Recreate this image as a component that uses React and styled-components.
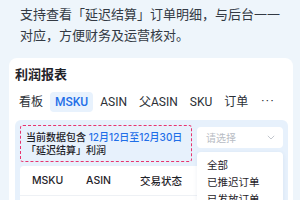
import React from "react";
import styled, { createGlobalStyle } from "styled-components";

const GlobalStyle = createGlobalStyle`
  html, body {
    margin: 0;
    padding: 0;
    background: #eef5fb;
    overflow: hidden;
  }
  body {
    font-family: "Inter", "Noto Sans CJK SC", sans-serif;
  }
`;

const Page = styled.div`
  width: 300px;
  height: 200px;
  overflow: hidden;
  background: #eef5fb;
`;

const Intro = styled.p`
  margin: 0;
  padding: 4px 16px 0 20px;
  font-size: 13px;
  line-height: 21px;
  color: #333a44;
`;

const Card = styled.section`
  margin: 12px 7px 0 9px;
  background: #ffffff;
  border-radius: 8px;
  padding: 7px 5px 0 6px;
  height: 200px;
`;

const Title = styled.h2`
  margin: 0;
  font-size: 13px;
  line-height: 18px;
  font-weight: 700;
  color: #1f2329;
`;

const Tabs = styled.div`
  display: flex;
  gap: 2px;
  margin: 9px 0 0 -1px;
  height: 20px;
  font-family: "Roboto", "Noto Sans CJK SC", sans-serif;
`;

const Tab = styled.div`
  padding: 0 5px;
  font-size: 12px;
  line-height: 20px;
  border-radius: 4px;
  color: ${(p) => (p.$active ? "#1f6fe8" : "#2b2f36")};
  background: ${(p) => (p.$active ? "#e8f2fd" : "transparent")};
  font-weight: ${(p) => (p.$active ? 500 : 400)};
`;

const More = styled.div`
  padding: 0 6px;
  font-size: 12px;
  line-height: 18px;
  letter-spacing: 1.5px;
  color: #2b2f36;
`;

const Panel = styled.div`
  margin-top: 8px;
  background: #e7f1fc;
  border-radius: 6px;
  padding: 5px;
  height: 120px;
`;

const FilterRow = styled.div`
  display: flex;
  gap: 5px;
  position: relative;
`;

const Notice = styled.div`
  width: 172px;
  box-sizing: border-box;
  border: 1px dashed #e8336e;
  border-radius: 3px;
  padding: 5px 5px 4px;
  font-size: 10px;
  line-height: 13px;
  font-weight: 500;
  color: #1f2329;
`;

const Blue = styled.span`
  color: #1f6fe8;
`;

const Select = styled.div`
  margin-top: 2px;
  flex: 1;
  height: 21px;
  background: #ffffff;
  border-radius: 4px;
  display: flex;
  align-items: center;
  justify-content: space-between;
  padding: 0 8px 0 9px;
  font-size: 10px;
  color: #b8bcc4;
`;

const Menu = styled.div`
  position: absolute;
  top: 27px;
  right: 0;
  width: 86px;
  height: 60px;
  background: #ffffff;
  border-radius: 4px;
  box-shadow: 0 1px 4px rgba(40, 80, 140, 0.08);
  padding: 5px 10px 0;
  box-sizing: border-box;
  z-index: 2;
`;

const MenuItem = styled.div`
  font-size: 10.5px;
  line-height: 17px;
  color: #1f2329;
  white-space: nowrap;
`;

const Table = styled.div`
  margin-top: 4px;
  background: #ffffff;
  border-radius: 4px 4px 0 0;
  height: 80px;
`;

const HeadRow = styled.div`
  display: grid;
  grid-template-columns: 54px 54px 1fr;
  height: 29px;
  align-items: center;
  padding-left: 12px;
  border-bottom: 1px solid #eef1f5;
`;

const HeadCell = styled.div`
  font-size: 10.5px;
  font-weight: 500;
  color: #1f2329;
`;

const Chevron = () => (
  <svg width="8" height="5" viewBox="0 0 8 5" fill="none">
    <path d="M0.8 0.8 L4 4 L7.2 0.8" stroke="#c3c7ce" strokeWidth="1" />
  </svg>
);

export default function App() {
  return (
    <Page>
      <GlobalStyle />
      <Intro>支持查看「延迟结算」订单明细，与后台一一对应，方便财务及运营核对。</Intro>
      <Card>
        <Title>利润报表</Title>
        <Tabs>
          <Tab>看板</Tab>
          <Tab $active>MSKU</Tab>
          <Tab>ASIN</Tab>
          <Tab>父ASIN</Tab>
          <Tab>SKU</Tab>
          <Tab>订单</Tab>
          <More>···</More>
        </Tabs>
        <Panel>
          <FilterRow>
            <Notice>
              当前数据包含 <Blue>12月12日至12月30日</Blue>
              <br />
              「延迟结算」利润
            </Notice>
            <Select>
              请选择
              <Chevron />
            </Select>
            <Menu>
              <MenuItem>全部</MenuItem>
              <MenuItem>已推迟订单</MenuItem>
              <MenuItem>已发放订单</MenuItem>
            </Menu>
          </FilterRow>
          <Table>
            <HeadRow>
              <HeadCell>MSKU</HeadCell>
              <HeadCell>ASIN</HeadCell>
              <HeadCell>交易状态</HeadCell>
            </HeadRow>
          </Table>
        </Panel>
      </Card>
    </Page>
  );
}
